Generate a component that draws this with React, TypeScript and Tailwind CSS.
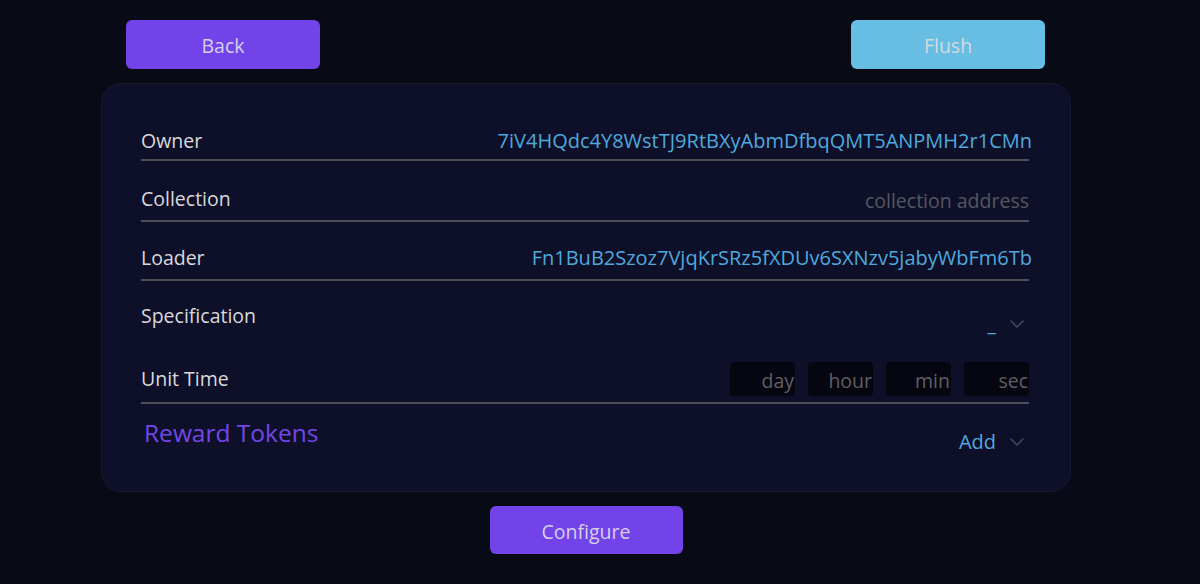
const font = { fontFamily: '"Open Sans", "Noto Sans", sans-serif' };

function Chevron() {
  return (
    <svg width="14" height="8" viewBox="0 0 14 8" fill="none" className="shrink-0">
      <path d="M1 1l6 6 6-6" stroke="#44465a" strokeWidth="1.6" strokeLinecap="round" strokeLinejoin="round" />
    </svg>
  );
}

function TimeBox({ label }: { label: string }) {
  return (
    <div className="flex h-[34px] w-[65px] items-end justify-end rounded-[4px] bg-[#05060f] pr-[1px] pb-[1px] text-[19.5px] leading-[28px] text-[#5f5f66]">
      {label}
    </div>
  );
}

export default function App() {
  return (
    <div className="h-[584px] w-[1200px] bg-[#080a16] text-[19.5px]" style={font}>
      <div className="ml-[101px] flex w-[970px] flex-col pt-[20px]">
        {/* top buttons */}
        <div className="flex justify-between px-[25px]">
          <button className="h-[49px] w-[194px] rounded-[6px] bg-[#7243e9] pt-[3px] text-[19.5px] text-[#d6cfe8]">Back</button>
          <button className="mr-[1px] h-[49px] w-[194px] rounded-[6px] bg-[#67bde2] pt-[3px] text-[19.5px] text-[#d3dbe0]">Flush</button>
        </div>

        {/* form card */}
        <div className="mt-[14px] rounded-[20px] border border-[#171931] bg-[#0e1029] pt-[39px] pr-[41px] pb-[35px] pl-[39px]">
          <div className="flex h-[38px] items-center justify-between border-b-2 border-[#4d4e58] leading-[28px]">
            <span className="text-[#d9d9dc]">Owner</span>
            <span className="-mr-[3px] text-[20px] text-[#4fa9dd]">7iV4HQdc4Y8WstTJ9RtBXyAbmDfbqQMT5ANPMH2r1CMn</span>
          </div>
          <div className="flex h-[61px] items-center justify-between border-b-2 border-[#4d4e58] pt-[16px] leading-[28px]">
            <span className="text-[#d9d9dc]">Collection</span>
            <span className="pt-[5px] text-[#55565f]">collection address</span>
          </div>
          <div className="flex h-[59px] items-center justify-between border-b-2 border-[#4d4e58] pt-[15px] leading-[28px]">
            <span className="text-[#d9d9dc]">Loader</span>
            <span className="-mr-[3px] text-[20px] text-[#4fa9dd]">Fn1BuB2Szoz7VjqKrSRz5fXDUv6SXNzv5jabyWbFm6Tb</span>
          </div>
          <div className="flex h-[70px] items-start justify-between leading-[28px]">
            <span className="mt-[21px] text-[#d9d9dc]">Specification</span>
            <div className="mt-[33px] flex items-center gap-[14px] pr-[5px]">
              <span className="leading-[20px] text-[#4fa9dd]">_</span>
              <Chevron />
            </div>
          </div>
          <div className="flex h-[53px] items-center justify-between border-b-2 border-[#4d4e58] pt-[5px] leading-[28px]">
            <span className="text-[#d9d9dc]">Unit Time</span>
            <div className="flex gap-[13px]">
              <TimeBox label="day" />
              <TimeBox label="hour" />
              <TimeBox label="min" />
              <TimeBox label="sec" />
            </div>
          </div>
          <div className="flex items-start justify-between pt-[13px]">
            <span className="pl-[3px] text-[24.5px] leading-[32px] text-[#7446e9]">Reward Tokens</span>
            <div className="mt-[11px] flex items-center gap-[14px] pr-[5px]">
              <span className="text-[20px] leading-[28px] text-[#4fa9dd]">Add</span>
              <Chevron />
            </div>
          </div>
        </div>

        {/* configure */}
        <div className="mt-[14px] flex justify-center">
          <button className="h-[48px] w-[193px] rounded-[6px] bg-[#7243e9] pt-[3px] text-[19.5px] text-[#d6cfe8]">Configure</button>
        </div>
      </div>
    </div>
  );
}
